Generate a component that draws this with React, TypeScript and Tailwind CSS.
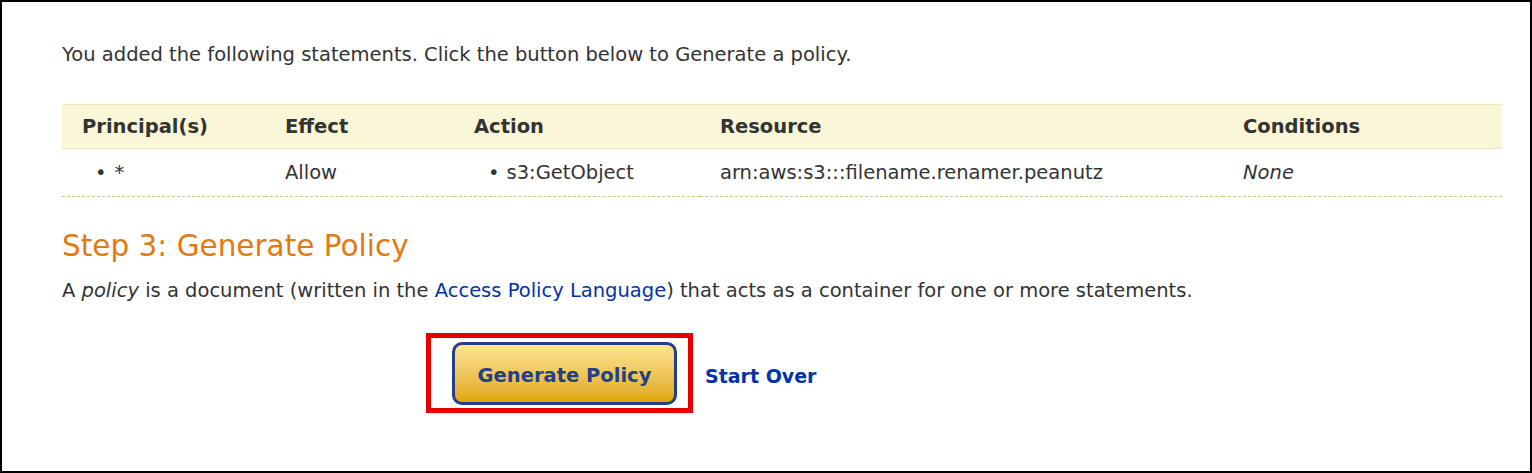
export default function App() {
  const font = { fontFamily: '"DejaVu Sans", Verdana, sans-serif' };
  return (
    <div className="w-[1532px] h-[473px] bg-white border-2 border-black text-[#333] overflow-hidden" style={font}>
      <div className="pl-[60px] pr-[28px] pt-[40px]">
        <p className="text-[19.5px] leading-[26px]">
          You added the following statements. Click the button below to Generate a policy.
        </p>

        <table className="mt-[36px] w-[1440px] text-[19.5px] border-collapse">
          <thead>
            <tr className="bg-[#faf7d9] border-t border-b border-[#ece7bd] h-[44px] text-left">
              <th className="w-[203px] pl-[20px] font-bold">Principal(s)</th>
              <th className="w-[189px] pl-[20px] font-bold">Effect</th>
              <th className="w-[246px] pl-[20px] font-bold">Action</th>
              <th className="w-[523px] pl-[20px] font-bold">Resource</th>
              <th className="pl-[20px] font-bold">Conditions</th>
            </tr>
          </thead>
          <tbody>
            <tr className="h-[48px] border-b border-dashed border-[#c9c98a]">
              <td className="pl-[33px]">
                <span className="mr-[8px]">•</span>*
              </td>
              <td className="pl-[20px]">Allow</td>
              <td className="pl-[34px]">
                <span className="mr-[7px]">•</span>s3:GetObject
              </td>
              <td className="pl-[20px]">arn:aws:s3:::filename.renamer.peanutz</td>
              <td className="pl-[20px] italic">None</td>
            </tr>
          </tbody>
        </table>

        <h2 className="mt-[30px] text-[29.5px] leading-[38px] text-[#e47911]">Step 3: Generate Policy</h2>
        <p className="mt-[13px] text-[19.5px] leading-[26px]">
          A <em>policy</em> is a document (written in the{" "}
          <a className="text-[#0033aa]">Access Policy Language</a>) that acts as a container for one or more statements.
        </p>

        <div className="mt-[29px] ml-[364px] flex items-center">
          <div className="border-[5px] border-[#e60000] pl-[21px] pr-[11px] pt-[4px] pb-[3px]">
            <button
              className="w-[225px] h-[63px] pt-[5px] rounded-[10px] border-[3px] border-[#233f86] bg-gradient-to-b from-[#fde590] to-[#e2a700] text-[#233f86] text-[19.5px] font-bold"
              style={font}
            >
              Generate Policy
            </button>
          </div>
          <a className="ml-[12px] pt-[6px] text-[#0033aa] text-[19px] font-bold">Start Over</a>
        </div>
      </div>
    </div>
  );
}
